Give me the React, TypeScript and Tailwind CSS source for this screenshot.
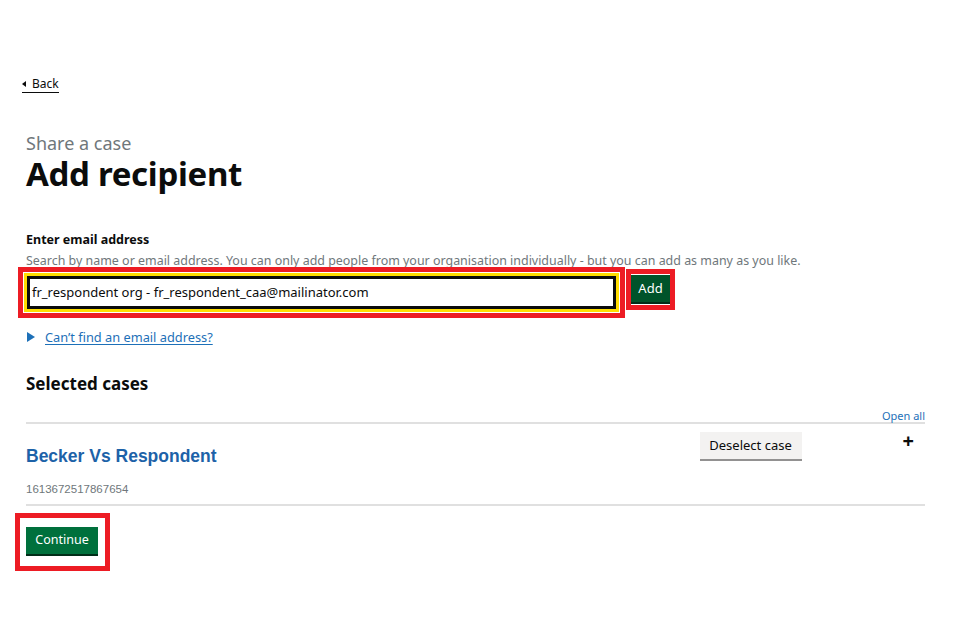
import type { FunctionComponent } from "react";

const font = { fontFamily: '"Noto Sans", "Liberation Sans", Arial, sans-serif' };
const arial = { fontFamily: '"Liberation Sans", Arial, sans-serif' };

const BackLink: FunctionComponent = () => (
  <a
    href="#"
    className="ml-[22px] inline-flex items-center gap-[6px] border-b border-[#0b0c0c] pb-[1px] text-[12px] leading-[14px] text-[#0b0c0c]"
  >
    <span className="h-0 w-0 border-y-[3.5px] border-r-[4px] border-y-transparent border-r-[#0b0c0c]" />
    <span>Back</span>
  </a>
);

const CaseRow: FunctionComponent = () => (
  <div className="border-b-2 border-[#e0e0e0]">
    <div className="flex items-start justify-between pt-[8px]">
      <div>
        <h3 className="mt-[12px] text-[17.5px] font-bold leading-[24px] text-[#1d62a8]" style={arial}>
          Becker Vs Respondent
        </h3>
        <p className="mt-[14px] mb-[8px] text-[11.5px] leading-[14px] text-[#6f777b]" style={arial}>
          1613672517867654
        </p>
      </div>
      <div className="flex items-start">
        <button className="h-[29px] w-[102px] border-b-2 border-[#929191] bg-[#f3f2f1] text-[13px] text-[#0b0c0c]">
          Deselect case
        </button>
        <span className="ml-[101px] mr-[11px] mt-[-1px] text-[20px] font-bold leading-[20px] text-[#0b0c0c]">
          +
        </span>
      </div>
    </div>
  </div>
);

export default function App() {
  return (
    <div className="h-[640px] w-[960px] bg-white" style={font}>
      <div className="pt-[69px]">
        <BackLink />
      </div>
      <main className="ml-[26px] w-[899px]">
        <p className="mt-[40px] text-[18px] leading-[20px] text-[#6f777b]">Share a case</p>
        <h1 className="mt-[2px] text-[33px] font-bold leading-[38px] tracking-[-0.3px] text-[#0b0c0c]">
          Add recipient
        </h1>

        <label className="mt-[38px] block text-[12.5px] font-bold leading-[18px] text-[#0b0c0c]">
          Enter email address
        </label>
        <p className="mt-[3px] text-[12.45px] leading-[18px] text-[#6f777b]">
          Search by name or email address. You can only add people from your organisation individually - but you can add as many as you like.
        </p>

        <div className="ml-[-8px] mt-[-3px] flex items-start">
          <div className="border-[5px] border-[#ed1c24] p-[1px]">
            <div className="border-[3px] border-[#ffdd00]">
              <div className="flex h-[33px] w-[589px] items-center border-[3px] border-[#0b0c0c] px-[2px] text-[13px] text-[#0b0c0c]">
                fr_respondent org - fr_respondent_caa@mailinator.com
              </div>
            </div>
          </div>
          <div className="ml-[1px] mt-[2px] border-[5px] border-[#ed1c24] py-[1px]">
            <button className="h-[29px] w-[39px] border-b-2 border-[#002d18] bg-[#00532a] text-[13px] text-white">
              Add
            </button>
          </div>
        </div>

        <div className="mt-[10px] flex items-center text-[12.8px] leading-[18px]">
          <span className="ml-[1px] h-0 w-0 border-y-[5px] border-l-[8px] border-y-transparent border-l-[#1d70b8]" />
          <a href="#" className="ml-[10px] text-[#1d70b8] underline underline-offset-2">
            Can’t find an email address?
          </a>
        </div>

        <h2 className="mt-[28px] text-[17px] font-bold leading-[20px] text-[#0b0c0c]">Selected cases</h2>

        <div className="mt-[16px]">
          <div className="flex justify-end">
            <a href="#" className="text-[11px] leading-[12px] text-[#1d70b8]">
              Open all
            </a>
          </div>
          <div className="border-t-2 border-[#e0e0e0]">
            <CaseRow />
          </div>
        </div>

        <div className="ml-[-11px] mt-[7px] inline-block border-[5px] border-[#ed1c24] pb-[10px] pl-[6px] pr-[7px] pt-[8px]">
          <button className="h-[29px] w-[72px] border-b-2 border-[#002d18] bg-[#00703c] text-[12.5px] text-white">
            Continue
          </button>
        </div>
      </main>
    </div>
  );
}
